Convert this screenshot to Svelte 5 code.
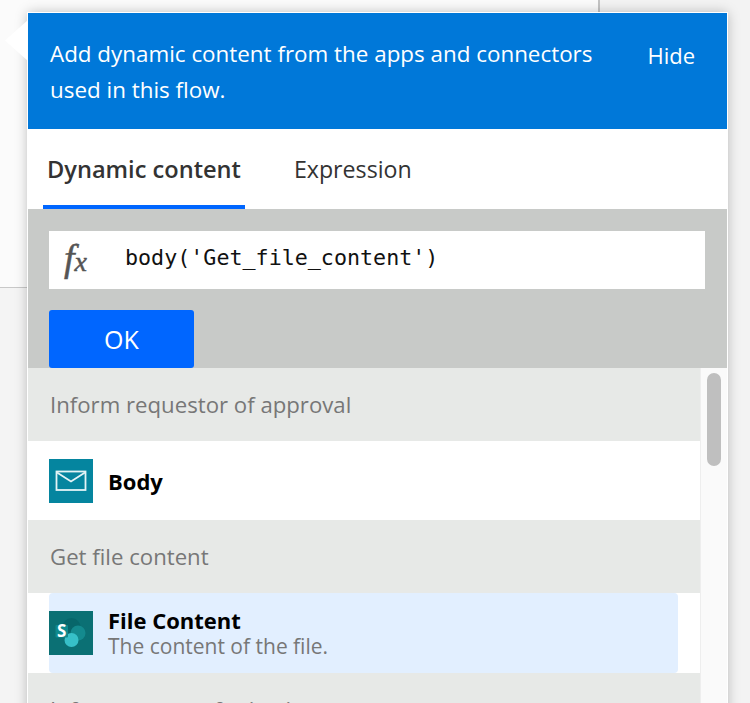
<script>
	const groups = [
		{
			title: 'Inform requestor of approval',
			items: [{ name: 'Body', icon: 'mail' }]
		},
		{
			title: 'Get file content',
			items: [{ name: 'File Content', desc: 'The content of the file.', icon: 'sharepoint', selected: true }]
		},
		{ title: 'Inform parent of rejection', items: [] }
	];
</script>

<div class="page">
	<div class="backdrop-left"></div>
	<div class="backdrop-right"></div>
	<div class="line-h"></div>
	<div class="line-v"></div>

	<div class="panel">
		<div class="arrow"></div>
		<div class="banner">
			<p>Add dynamic content from the apps and connectors used in this flow.</p>
			<span class="hide">Hide</span>
		</div>

		<div class="tabs">
			<div class="tab active">Dynamic content</div>
			<div class="tab">Expression</div>
		</div>

		<div class="editor">
			<div class="input">
				<span class="fx">f<span class="fx-x">x</span></span>
				<span class="code">body('Get_file_content')</span>
			</div>
			<button class="ok">OK</button>
		</div>

		<div class="list-wrap">
			<div class="list">
				{#each groups as group}
					<div class="section">{group.title}</div>
					{#each group.items as item}
						<div class="row">
							<div class="item" class:selected={item.selected}>
								{#if item.icon === 'mail'}
									<svg class="icon" width="44" height="44" viewBox="0 0 44 44">
										<rect width="44" height="44" fill="#05859f" />
										<rect x="7.5" y="12.5" width="29" height="18.5" fill="none" stroke="#e4f3f6" stroke-width="1.8" />
										<path d="M8 13.5 L22 22.5 L36 13.5" fill="none" stroke="#e4f3f6" stroke-width="1.8" />
									</svg>
								{:else}
									<svg class="icon" width="44" height="44" viewBox="0 0 44 44">
										<rect width="44" height="44" fill="#0b7074" />
										<circle cx="22.5" cy="16" r="9" fill="#07666a" />
										<circle cx="29" cy="22" r="7.5" fill="#148a8e" />
										<circle cx="22.5" cy="29" r="7" fill="#37c0c8" />
										<rect x="6.5" y="14" width="12.5" height="12.5" rx="1" fill="#0f8a8e" />
										<text x="12.8" y="25.6" class="s">S</text>
									</svg>
								{/if}
								<div class="text">
									<div class="name">{item.name}</div>
									{#if item.desc}<div class="desc">{item.desc}</div>{/if}
								</div>
							</div>
						</div>
					{/each}
				{/each}
			</div>
			<div class="scrollbar"><div class="thumb"></div></div>
		</div>
	</div>
</div>

<style>
	:global(body) {
		margin: 0;
		background: #f4f4f4;
	}

	.page {
		position: relative;
		width: 750px;
		height: 703px;
		overflow: hidden;
		padding-top: 13px;
		box-sizing: border-box;
		font-family: 'Open Sans', 'Noto Sans', sans-serif;
	}

	.backdrop-left {
		position: absolute;
		left: 0;
		top: 0;
		width: 600px;
		height: 288px;
		background: #fbfbfb;
	}

	.backdrop-right {
		position: absolute;
		left: 600px;
		top: 0;
		width: 150px;
		height: 703px;
		background: #f3f3f3;
	}

	.line-h {
		position: absolute;
		left: 0;
		top: 287px;
		width: 30px;
		height: 1px;
		background: #c8c8c8;
	}

	.line-v {
		position: absolute;
		left: 598px;
		top: 0;
		width: 2px;
		height: 14px;
		background: #c4c4c4;
	}

	.panel {
		position: relative;
		width: 699px;
		margin-left: 28px;
		height: 720px;
		background: #fff;
		outline: 1px solid #fff;
		box-shadow: 0 0 12px rgba(0, 0, 0, 0.28);
	}

	.arrow {
		position: absolute;
		left: -23px;
		top: 7px;
		width: 23px;
		height: 41px;
		background: #fff;
		clip-path: polygon(100% 0, 0 50%, 100% 100%);
	}

	.banner {
		position: relative;
		display: flex;
		justify-content: space-between;
		height: 116px;
		box-sizing: border-box;
		padding: 23px 32px 0 22px;
		background: #0078d9;
		color: #fff;
	}

	.banner p {
		margin: 0;
		width: 560px;
		font-size: 22.4px;
		line-height: 36px;
	}

	.hide {
		font-size: 22px;
		line-height: 36px;
		margin-top: 1px;
	}

	.tabs {
		display: flex;
		height: 80px;
		box-sizing: border-box;
		padding-left: 15px;
		color: #333;
		font-size: 23.2px;
	}

	.tab {
		padding: 22px 4px 0;
		line-height: 36px;
		margin-right: 45px;
	}

	.tab.active {
		font-weight: 600;
		font-size: 23.6px;
		border-bottom: 4px solid #0066ff;
		height: 80px;
		box-sizing: border-box;
	}

	.editor {
		height: 159px;
		box-sizing: border-box;
		padding: 22px 22px 0 21px;
		background: #c8cac8;
	}

	.input {
		display: flex;
		align-items: center;
		height: 58px;
		background: #fff;
	}

	.fx {
		width: 76px;
		padding-left: 15px;
		box-sizing: border-box;
		font-family: 'Liberation Serif', serif;
		font-style: italic;
		font-size: 38px;
		line-height: 54px;
		margin-top: -1px;
		color: #555;
		-webkit-text-stroke: 0.5px #555;
	}

	.fx-x {
		font-size: 28px;
	}

	.code {
		font-family: 'DejaVu Sans Mono', monospace;
		font-size: 21.7px;
		color: #111;
		margin-top: -6px;
	}

	.ok {
		display: block;
		width: 145px;
		height: 58px;
		margin-top: 21px;
		border: 0;
		border-radius: 3px;
		background: #0066ff;
		color: #fff;
		font-family: inherit;
		font-size: 25px;
	}

	.list-wrap {
		display: flex;
		height: 335px;
		overflow: hidden;
	}

	.list {
		width: 672px;
		flex: none;
		margin-top: -0.25px;
	}

	.section {
		height: 73px;
		box-sizing: border-box;
		padding: 19px 22px 0;
		line-height: 36px;
		background: #e7e9e7;
		color: #777;
		font-size: 22.2px;
	}

	.row {
		height: 79.5px;
		background: #fff;
		padding: 0 22px 0 21px;
		box-sizing: border-box;
	}

	.item {
		display: flex;
		align-items: center;
		gap: 15px;
		height: 79.5px;
		border-radius: 4px;
	}

	.item.selected {
		background: #e2efff;
	}

	.icon {
		flex: none;
	}

	.s {
		font-family: 'Open Sans', sans-serif;
		font-weight: 700;
		font-size: 17px;
		fill: #fff;
		text-anchor: middle;
	}

	.name {
		font-size: 22px;
		font-weight: 700;
		line-height: 26px;
		color: #000;
	}

	.desc {
		font-size: 21px;
		line-height: 26px;
		color: #777;
	}

	.scrollbar {
		flex: 1;
		position: relative;
		background: #fafafa;
		border-left: 1px solid #eee;
		padding: 5px 0 0 6px;
	}

	.thumb {
		width: 14px;
		height: 93px;
		border-radius: 7px;
		background: #bfbfbf;
	}
</style>
